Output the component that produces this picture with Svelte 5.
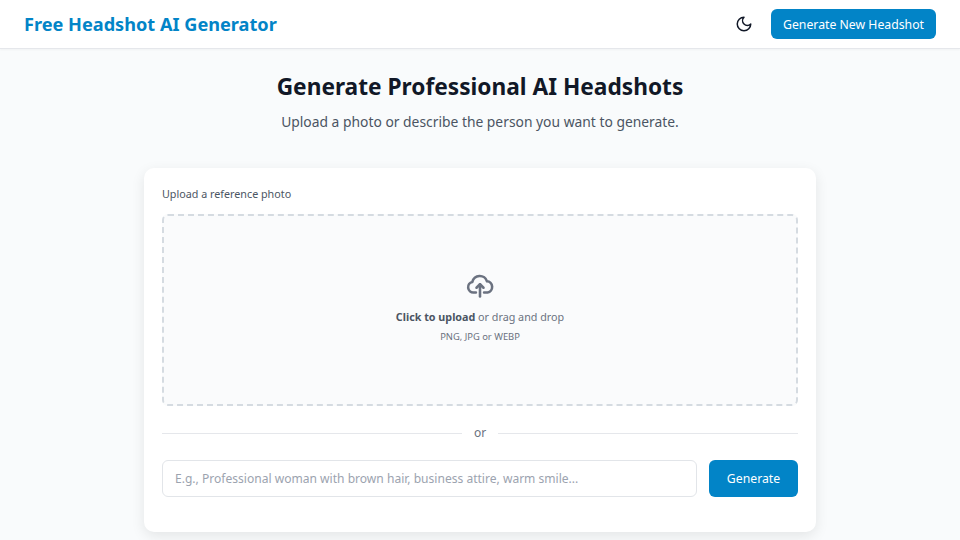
<script>
  let prompt = $state('');
</script>

<div class="page">
  <header class="topbar">
    <h1 class="brand">Free Headshot AI Generator</h1>
    <div class="actions">
      <button class="theme" aria-label="Toggle theme">
        <svg width="18" height="18" viewBox="0 0 24 24" fill="none" stroke="currentColor" stroke-width="2" stroke-linecap="round" stroke-linejoin="round">
          <path d="M12 3a6 6 0 0 0 9 9 9 9 0 1 1-9-9Z" />
        </svg>
      </button>
      <button class="primary small">Generate New Headshot</button>
    </div>
  </header>

  <main class="content">
    <h2 class="title">Generate Professional AI Headshots</h2>
    <p class="subtitle">Upload a photo or describe the person you want to generate.</p>

    <section class="card">
      <div class="label">Upload a reference photo</div>
      <div class="dropzone">
        <svg class="cloud" width="28" height="28" viewBox="0 0 24 24" fill="none" stroke="currentColor" stroke-width="2.2" stroke-linecap="round" stroke-linejoin="round">
          <path d="M12 10.5V21" />
          <path d="M8.5 17.5H6.5A4.5 4.5 0 0 1 5.4 8.6 6.5 6.5 0 0 1 18 8a4.8 4.8 0 0 1 .5 9.5h-3" />
          <path d="m9 13.5 3-3 3 3" />
        </svg>
        <div class="hint"><strong>Click to upload</strong> or drag and drop</div>
        <div class="types">PNG, JPG or WEBP</div>
      </div>

      <div class="divider"><span>or</span></div>

      <div class="prompt-row">
        <input class="prompt" bind:value={prompt} placeholder="E.g., Professional woman with brown hair, business attire, warm smile..." />
        <button class="primary large">Generate</button>
      </div>
    </section>
  </main>
</div>

<style>
  :global(body) {
    margin: 0;
    background: #f9fbfc;
    overflow: hidden;
  }

  .page {
    height: 540px;
    overflow: hidden;
    font-family: "Noto Sans", "Open Sans", sans-serif;
    color: #111827;
  }

  .topbar {
    display: flex;
    align-items: center;
    justify-content: space-between;
    height: 48px;
    padding: 0 24px;
    background: #fff;
    border-bottom: 1px solid #e5e7eb;
    box-shadow: 0 1px 2px rgba(0, 0, 0, 0.04);
  }

  .brand {
    margin: 0;
    font-size: 18.15px;
    font-weight: 700;
    color: #0284c7;
  }

  .actions {
    display: flex;
    align-items: center;
    gap: 18px;
  }

  .theme {
    display: flex;
    padding: 0;
    border: 0;
    background: none;
    color: #111827;
  }

  button.primary {
    border: 0;
    color: #fff;
    background: #0284c7;
    font-family: inherit;
    border-radius: 6px;
  }

  .small {
    width: 165px;
    height: 30px;
    font-size: 12.25px;
  }

  .content {
    display: flex;
    flex-direction: column;
    align-items: center;
  }

  .title {
    margin: 21px 0 0;
    font-size: 22.7px;
    line-height: 34px;
    font-weight: 700;
  }

  .subtitle {
    margin: 7px 0 0;
    font-size: 13.85px;
    line-height: 22px;
    color: #4b5563;
  }

  .card {
    box-sizing: border-box;
    width: 672px;
    height: 364px;
    margin-top: 35px;
    padding: 18px;
    background: #fff;
    border-radius: 10px;
    box-shadow: 0 4px 14px rgba(0, 0, 0, 0.09);
  }

  .label {
    font-size: 10.75px;
    line-height: 16px;
    color: #4b5563;
  }

  .dropzone {
    box-sizing: border-box;
    display: flex;
    flex-direction: column;
    align-items: center;
    height: 192px;
    margin-top: 12px;
    background: #fafbfc;
    border: 2px dashed #d5dbe1;
    border-radius: 6px;
    color: #6b7280;
  }

  .cloud {
    margin-top: 56px;
    color: #6b7280;
  }

  .hint {
    margin-top: 9px;
    font-size: 10.75px;
    line-height: 16px;
    color: #6b7280;
  }

  .hint strong {
    color: #4b5563;
  }

  .types {
    margin-top: 5px;
    font-size: 9.4px;
    line-height: 14px;
    color: #6b7280;
  }

  .divider {
    display: flex;
    align-items: center;
    gap: 12px;
    margin-top: 18px;
    font-size: 12px;
    line-height: 18px;
    color: #6b7280;
  }

  .divider::before,
  .divider::after {
    content: '';
    flex: 1;
    height: 1px;
    background: #e5e7eb;
  }

  .prompt-row {
    display: flex;
    gap: 12px;
    margin-top: 18px;
  }

  .prompt {
    box-sizing: border-box;
    flex: 1;
    min-width: 0;
    height: 37px;
    padding: 0 12px;
    font-family: inherit;
    font-size: 12.07px;
    background: #fff;
    border: 1px solid #e2e5e9;
    border-radius: 6px;
    outline: none;
  }

  .prompt::placeholder {
    color: #9ca3af;
  }

  .large {
    width: 89px;
    height: 37px;
    font-size: 12.25px;
  }
</style>
